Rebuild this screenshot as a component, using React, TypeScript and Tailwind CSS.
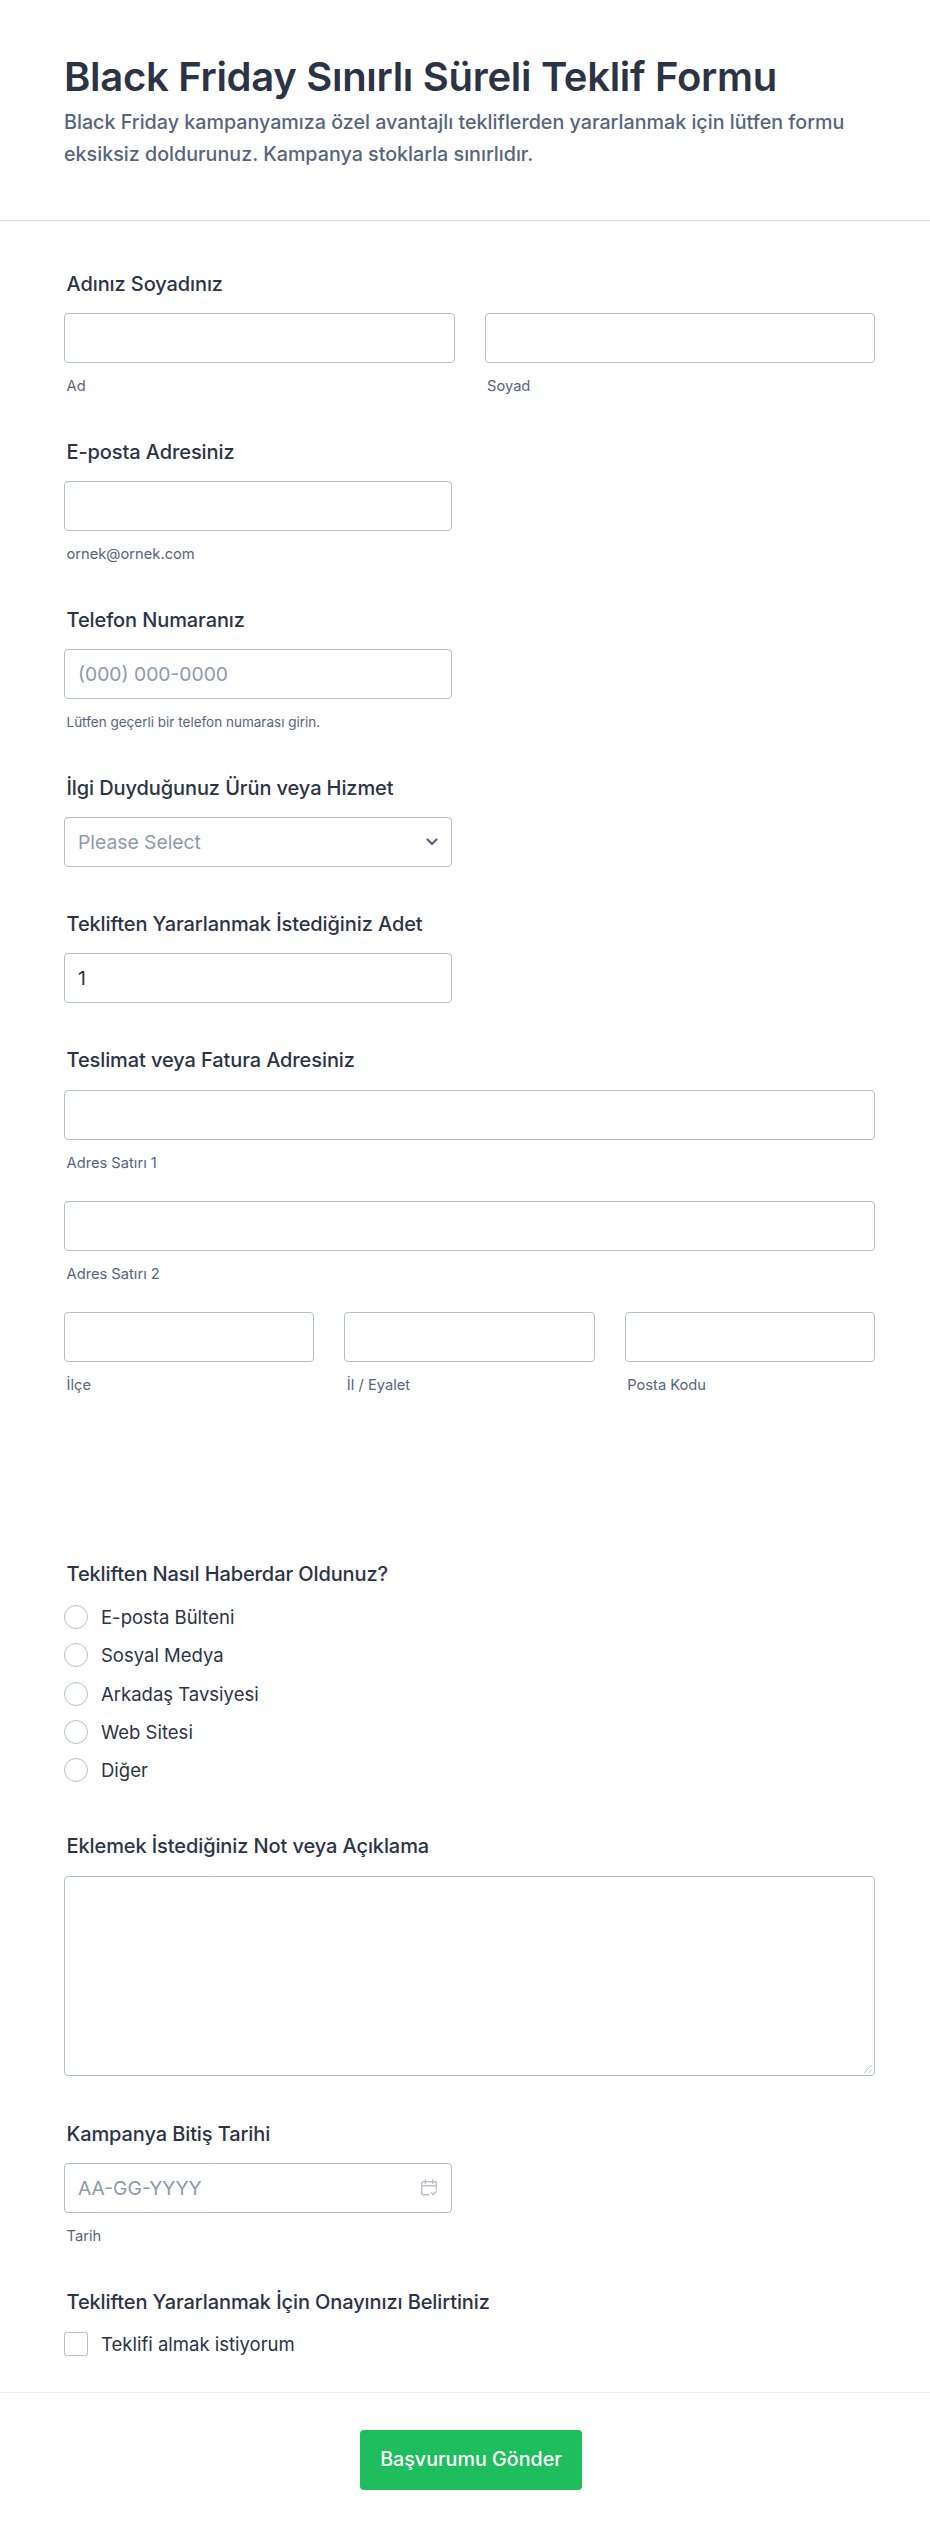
import React from "react";

const box = "block h-[50px] rounded-[4px] border border-[#b8bdc9] bg-white";

function Label({ children, className = "" }: { children: React.ReactNode; className?: string }) {
  return <div className={`h-6 pl-[2.5px] text-[20px] leading-6 font-medium tracking-[-0.1px] text-[#2c3345] ${className}`}>{children}</div>;
}

function Sub({ children, className = "text-[14.7px]" }: { children: React.ReactNode; className?: string }) {
  return <div className={`mt-[14px] h-[18px] pl-[2.5px] leading-[18px] text-[#57647e] ${className}`}>{children}</div>;
}

function Box({ className = "", children }: { className?: string; children?: React.ReactNode }) {
  return <div className={`${box} flex items-center justify-between px-[13px] text-[19.3px] ${className}`}>{children}</div>;
}

const radios = ["E-posta Bülteni", "Sosyal Medya", "Arkadaş Tavsiyesi", "Web Sitesi", "Diğer"];

export default function App() {
  return (
    <div className="min-h-[2539px] bg-white font-['Inter',sans-serif]">
      <header className="h-[221px] border-b border-[#d8dae3] px-[64px] pt-[54px]">
        <h1 className="text-[40px] leading-[46px] font-semibold tracking-[-0.3px] text-[#2c3345]">Black Friday Sınırlı Süreli Teklif Formu</h1>
        <p className="mt-[6px] text-[19.7px] leading-[32px] font-medium text-[#57647e]">
          Black Friday kampanyamıza özel avantajlı tekliflerden yararlanmak için lütfen formu
          <br />
          eksiksiz doldurunuz. Kampanya stoklarla sınırlıdır.
        </p>
      </header>

      <main className="pr-[55px] pl-[64px] pt-[51px]">
        <Label>Adınız Soyadınız</Label>
        <div className="mt-[17px] grid grid-cols-2 gap-[30px]">
          <div><Box /><Sub>Ad</Sub></div>
          <div><Box /><Sub>Soyad</Sub></div>
        </div>

        <Label className="mt-[45px]">E-posta Adresiniz</Label>
        <div className="mt-[17px] w-[388px]"><Box /><Sub>ornek@ornek.com</Sub></div>

        <Label className="mt-[45px]">Telefon Numaranız</Label>
        <div className="mt-[17px] w-[388px]">
          <Box className="text-[#8d99ae]">(000) 000-0000</Box>
          <Sub className="text-[13.5px]">Lütfen geçerli bir telefon numarası girin.</Sub>
        </div>

        <Label className="mt-[45px]">İlgi Duyduğunuz Ürün veya Hizmet</Label>
        <Box className="mt-[17px] w-[388px] text-[#8d99ae]">
          <span>Please Select</span>
          <svg width="14" height="10" viewBox="0 0 14 10" fill="none" className="mr-[-1px]">
            <path d="M2.5 2.5 7 7l4.5-4.5" stroke="#57647e" strokeWidth="2.2" strokeLinecap="round" strokeLinejoin="round" />
          </svg>
        </Box>

        <Label className="mt-[45px]">Tekliften Yararlanmak İstediğiniz Adet</Label>
        <Box className="mt-[17px] w-[388px] text-[#2c3345]">1</Box>

        <Label className="mt-[45px]">Teslimat veya Fatura Adresiniz</Label>
        <Box className="mt-[18px]" />
        <Sub>Adres Satırı 1</Sub>
        <Box className="mt-[29px]" />
        <Sub>Adres Satırı 2</Sub>
        <div className="mt-[29px] grid grid-cols-3 gap-[30px]">
          <div><Box /><Sub>İlçe</Sub></div>
          <div><Box /><Sub>İl / Eyalet</Sub></div>
          <div><Box /><Sub>Posta Kodu</Sub></div>
        </div>

        <Label className="mt-[168px]">Tekliften Nasıl Haberdar Oldunuz?</Label>
        <div className="mt-[19px] flex flex-col gap-[14.3px]">
          {radios.map((r) => (
            <div key={r} className="flex h-6 items-center gap-[13px]">
              <span className="h-6 w-6 rounded-full border border-[#b8bdc9] bg-white" />
              <span className="text-[18.5px] leading-6 text-[#2c3345]">{r}</span>
            </div>
          ))}
        </div>

        <Label className="mt-[52px]">Eklemek İstediğiniz Not veya Açıklama</Label>
        <div className="relative mt-[18px] h-[200px] rounded-[4px] border border-[#b8bdc9] bg-white">
          <svg width="10" height="10" viewBox="0 0 10 10" className="absolute right-[1px] bottom-[1px]" fill="none">
            <path d="M1 9 9 1M5.5 9 9 5.5" stroke="#c3c7d2" strokeWidth="1" />
          </svg>
        </div>

        <Label className="mt-[46px]">Kampanya Bitiş Tarihi</Label>
        <div className="mt-[17px] w-[388px]">
          <Box className="text-[#8d99ae]">
            <span>AA-GG-YYYY</span>
            <svg width="18" height="18" viewBox="0 0 18 18" fill="none" stroke="#bcc1cd" strokeWidth="1.5" strokeLinecap="round" strokeLinejoin="round">
              <path d="M9 15.8H3.2a1.5 1.5 0 0 1-1.5-1.5V4.3a1.5 1.5 0 0 1 1.5-1.5h11.6a1.5 1.5 0 0 1 1.5 1.5v6" />
              <path d="M1.7 6.7h14.6M5.3 1v3.2M12.7 1v3.2M11.5 14l1.6 1.6 3-3" />
            </svg>
          </Box>
          <Sub>Tarih</Sub>
        </div>

        <Label className="mt-[45px]">Tekliften Yararlanmak İçin Onayınızı Belirtiniz</Label>
        <div className="mt-[18px] flex h-6 items-center gap-[13px]">
          <span className="h-6 w-6 rounded-[3px] border border-[#b8bdc9] bg-white" />
          <span className="text-[18.5px] leading-6 text-[#2c3345]">Teklifi almak istiyorum</span>
        </div>
      </main>

      <footer className="mt-[36px] flex justify-center border-t border-[#f0f1f5] pt-[37px] pl-[12px]">
        <button className="h-[60px] w-[222px] rounded-[4px] bg-[#1ebd5d] text-[19.7px] font-medium text-white">Başvurumu Gönder</button>
      </footer>
    </div>
  );
}
